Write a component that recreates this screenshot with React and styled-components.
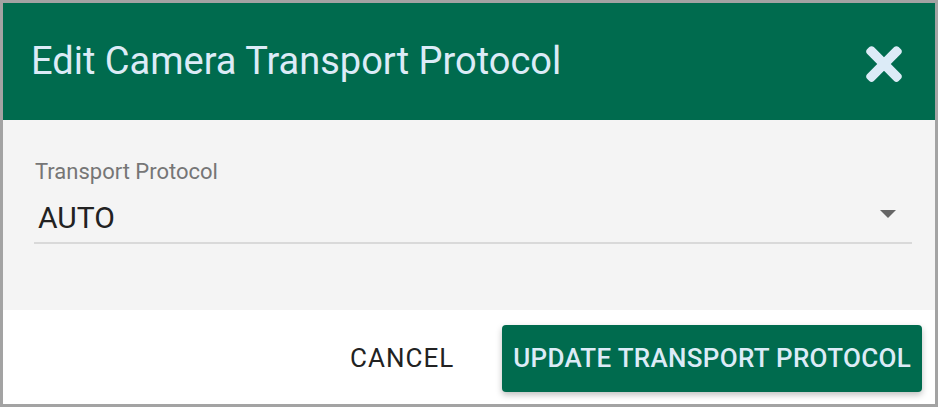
import React from 'react';
import styled, { createGlobalStyle } from 'styled-components';
import { FaTimes } from 'react-icons/fa';

const GlobalStyle = createGlobalStyle`
  html, body {
    margin: 0;
    padding: 0;
    background: #a3a3a3;
  }
  body {
    font-family: Roboto, 'Liberation Sans', sans-serif;
  }
`;

const Dialog = styled.div`
  box-sizing: border-box;
  width: 938px;
  height: 407px;
  border: 3px solid #a3a3a3;
  display: flex;
  flex-direction: column;
  background: #ffffff;
`;

const Header = styled.header`
  height: 117px;
  background: #006b4e;
  display: flex;
  align-items: center;
  justify-content: space-between;
  padding: 0 25px 0 28px;
`;

const Title = styled.h2`
  margin: 0;
  font-size: 38px;
  font-weight: 400;
  color: #dcebf7;
  padding-bottom: 2px;
`;

const CloseButton = styled.button`
  border: none;
  background: none;
  padding: 0;
  display: flex;
  color: #dcebf7;
  font-size: 52px;
  cursor: pointer;
  margin-top: 4px;
`;

const Body = styled.div`
  height: 190px;
  background: #f4f4f4;
  padding: 39px 23px 0 31px;
  box-sizing: border-box;
`;

const Label = styled.label`
  display: block;
  font-size: 22px;
  color: #767676;
  padding-left: 1px;
`;

const SelectRow = styled.div`
  display: flex;
  align-items: center;
  justify-content: space-between;
  height: 58px;
  border-bottom: 2px solid #d9d9d9;
  padding: 0 16px 0 4px;
`;

const Value = styled.span`
  font-size: 30px;
  color: #222;
  padding-top: 8px;
`;

const Caret = styled.span`
  width: 0;
  height: 0;
  border-left: 8px solid transparent;
  border-right: 8px solid transparent;
  border-top: 8px solid #666;
  margin-top: 2px;
`;

const Footer = styled.footer`
  flex: 1;
  display: flex;
  align-items: center;
  justify-content: flex-end;
  gap: 24px;
  padding: 2px 13px 0 0;
`;

const TextButton = styled.button`
  border: none;
  border-radius: 4px;
  font-family: inherit;
  font-size: 26px;
  font-weight: ${p => (p.primary ? 500 : 400)};
  letter-spacing: ${p => (p.primary ? '0.3px' : '1px')};
  text-transform: uppercase;
  cursor: pointer;
  padding: 0 ${p => (p.primary ? '11px' : '24px')};
  height: 67px;
  color: ${p => (p.primary ? '#dcebf7' : '#222')};
  background: ${p => (p.primary ? '#006b4e' : 'transparent')};
  box-shadow: ${p => (p.primary ? '0 3px 6px rgba(0,0,0,0.25)' : 'none')};
`;

export default function App() {
  return (
    <>
      <GlobalStyle />
      <Dialog>
        <Header>
          <Title>Edit Camera Transport Protocol</Title>
          <CloseButton aria-label="close">
            <FaTimes />
          </CloseButton>
        </Header>
        <Body>
          <Label>Transport Protocol</Label>
          <SelectRow>
            <Value>AUTO</Value>
            <Caret />
          </SelectRow>
        </Body>
        <Footer>
          <TextButton>Cancel</TextButton>
          <TextButton primary>Update Transport Protocol</TextButton>
        </Footer>
      </Dialog>
    </>
  );
}
